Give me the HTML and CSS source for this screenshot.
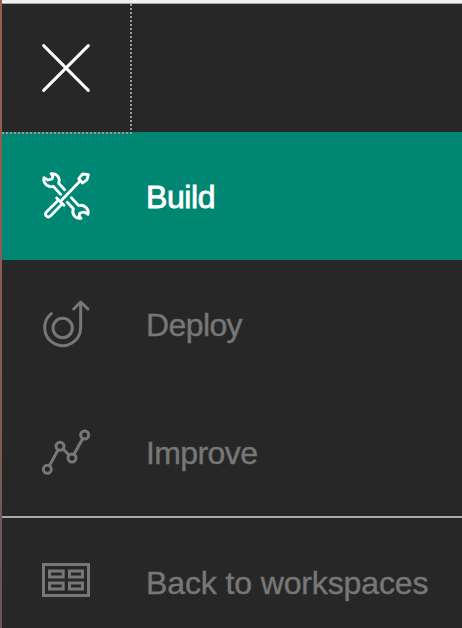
FILE: index.html
```html
<!DOCTYPE html>
<html lang="en">
<head>
<meta charset="utf-8">
<title>Navigation</title>
<link rel="stylesheet" href="styles.css">
</head>
<body>
<nav class="menu">
  <div class="header">
    <button class="close" aria-label="Close">
      <svg class="icon" viewBox="0 0 225 210"><path d="M41 38L175 172M175 38L41 172"/></svg>
    </button>
  </div>
  <a class="item active">
    <svg class="icon" viewBox="0 3 225 210">
      <path id="wrench" d="M92 103L70 79C54 84 38 69 42 53L54 60L66 57L69 47L63 41C80 39 92 53 86 70L104 89"/>
      <use href="#wrench" transform="rotate(180 108 108)"/>
      <path d="M96 119L151 62M146 56L158 42L175 44L171 59L158 69ZM80 114L102 136M85 121L49 156C42 166 53 176 62 167L96 132"/>
    </svg>
    <span class="label">Build</span>
  </a>
  <a class="item">
    <svg class="icon" viewBox="0 -3 225 210"><path d="M64 71A54 54 0 1 0 152 114V37M131 57L152 36L174 57"/><circle cx="98" cy="114" r="29"/></svg>
    <span class="label">Deploy</span>
  </a>
  <a class="item">
    <svg class="icon" viewBox="0 -9 225 210"><circle cx="52" cy="148" r="12"/><circle cx="90" cy="79" r="12"/><circle cx="126" cy="114" r="12"/><circle cx="164" cy="45" r="12"/><path d="M58 137L84 90M99 87L117 105M132 103L158 56"/></svg>
    <span class="label">Improve</span>
  </a>
  <a class="item back">
    <svg class="icon square" viewBox="0 -9 225 210"><path d="M40.500 43.500H175.500V136.500H40.500Z"/><path d="M58.500 63H99.500V81H58.500ZM118.500 63H157.500V81H118.500ZM58.500 99H99.500V117H58.500ZM118.500 99H157.500V117H118.500Z"/></svg>
    <span class="label">Back to workspaces</span>
  </a>
</nav>
</body>
</html>
```
FILE: styles.css
```css
* { box-sizing: border-box; }
body {
  margin: 0;
  height: 628px;
  padding-left: 2px;
  overflow: hidden;
  background: linear-gradient(#98604f, #7d5b55 70%, #65545c);
  font-family: "Liberation Sans", Arial, sans-serif;
}
.menu {
  height: 628px;
  background: #272727;
  border-top: 3px solid #f0f0f0;
}
.header {
  height: 129px;
  border-top: 1px solid #aaa;
}
.close {
  position: relative;
  z-index: 1;
  display: flex;
  align-items: center;
  width: 130px;
  height: 130px;
  padding: 0 0 0 28px;
  background: none;
  border: 0 dotted #999;
  border-width: 0 2px 2px 0;
  color: #fff;
}
.item {
  display: flex;
  align-items: center;
  height: 128px;
  padding-left: 28px;
  color: #777;
}
.active {
  background: #008774;
  color: #fff;
}
.back {
  height: 130px;
  border-top: 2px solid #aaa;
}
.icon {
  flex: none;
  width: 75px;
  height: 70px;
  fill: none;
  stroke: currentColor;
  stroke-width: 9;
  stroke-linecap: round;
  stroke-linejoin: round;
}
.active .icon { stroke-width: 8.5; }
.square {
  stroke-linecap: butt;
  stroke-linejoin: miter;
}
.label {
  margin-left: 41px;
  padding-top: 2px;
  font-size: 32px;
  line-height: 36px;
  letter-spacing: -0.6px;
  white-space: nowrap;
  -webkit-text-stroke: 0.4px currentColor;
}
.active .label {
  letter-spacing: -0.4px;
  -webkit-text-stroke-width: 0.8px;
}
.back .label { letter-spacing: -0.12px; }
```
